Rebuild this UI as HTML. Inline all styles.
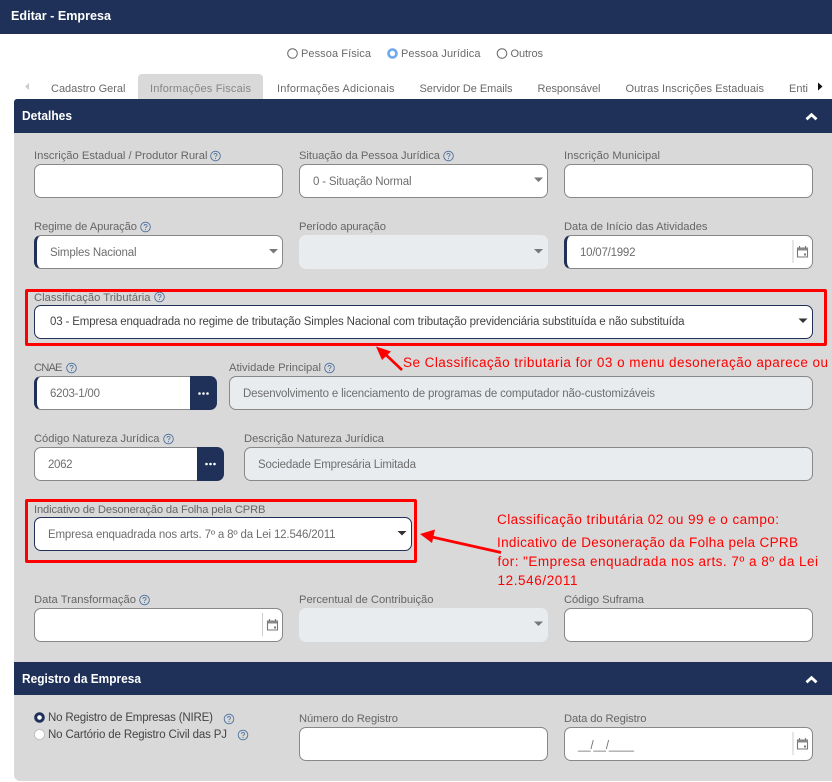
<!DOCTYPE html>
<html lang="pt-BR"><head><meta charset="utf-8"><title>Editar - Empresa</title>
<style>
html,body{margin:0;padding:0;background:#fff}
#p{position:relative;width:832px;height:782px;overflow:hidden;background:#fff;font-family:"Liberation Sans",sans-serif}
#p>div{position:absolute;box-sizing:border-box}
.n{background:#1f3158}
.i{background:#fff;border:1px solid #888;border-radius:7px;height:34px}
.d{background:#e9ecef;border-radius:7px;height:34px}
.h{border-left:3px solid #1f3158}
.a{border-color:#1f3158}
.r{border:3px solid #f00;border-radius:2px}
svg{position:absolute;left:0;top:0}
text{font-family:"Liberation Sans",sans-serif;font-size:11px;fill:#666}
.b{font-weight:700;font-size:13px;fill:#fff}
.t{font-size:11px;fill:#6a6a6a}
.l{font-size:11.2px;fill:#666}
.v{font-size:11.5px;fill:#6e6e6e}
.k{font-size:11.5px;fill:#444}
.o{font-size:13.5px;fill:#f00}
</style></head><body><div id="p">
<div class="n" style="left:0;top:0;width:832px;height:34px"></div>
<div style="left:138px;top:74px;width:125px;height:25px;background:#d9d9d9;border-radius:4px 4px 0 0"></div>
<div style="left:14px;top:99px;width:818px;height:682px;background:#d9d9d9;border-radius:4px 0 0 6px"></div>
<div class="n" style="left:14px;top:99px;width:818px;height:34px;border-radius:3px 0 0 0"></div>
<div class="n" style="left:14px;top:662px;width:818px;height:33px"></div>

<div class="i" style="left:34px;top:164px;width:249px"></div>
<div class="i" style="left:299px;top:164px;width:249px"></div>
<div class="i" style="left:564px;top:164px;width:249px"></div>
<div class="i h" style="left:34px;top:235px;width:249px"></div>
<div class="d" style="left:299px;top:235px;width:249px"></div>
<div class="i h" style="left:564px;top:235px;width:249px"></div>
<div class="i a" style="left:34px;top:305px;width:779px"></div>
<div class="i h" style="left:34px;top:376px;width:157px;border-radius:7px 0 0 7px"></div>
<div class="n" style="left:190px;top:376px;width:27px;height:34px;border-radius:0 7px 7px 0"></div>
<div class="d" style="left:229px;top:376px;width:584px;border:1px solid #888"></div>
<div class="i" style="left:34px;top:447px;width:164px;border-radius:7px 0 0 7px"></div>
<div class="n" style="left:197px;top:447px;width:27px;height:34px;border-radius:0 7px 7px 0"></div>
<div class="d" style="left:244px;top:447px;width:569px;border:1px solid #888"></div>
<div class="i a" style="left:34px;top:517px;width:378px"></div>
<div class="i" style="left:34px;top:608px;width:249px"></div>
<div class="d" style="left:299px;top:608px;width:249px"></div>
<div class="i" style="left:564px;top:608px;width:249px"></div>
<div class="i" style="left:299px;top:727px;width:249px"></div>
<div class="i" style="left:564px;top:727px;width:249px"></div>
<div class="r" style="left:25px;top:289px;width:802px;height:57px"></div>
<div class="r" style="left:25px;top:499px;width:392px;height:64px"></div>

<svg width="832" height="782" viewBox="0 0 832 782">
<defs>
<g id="c"><path d="M-5-3.500H5V5.500H-5Z" fill="none" stroke="#777" stroke-width="1.100"/><path d="M-5-3.500H5V-1H-5Z" fill="#888"/><path d="M-3-5.500V-3M3-5.500V-3" stroke="#777" stroke-width="1.100"/><rect x="1.500" y="2" width="2" height="2" fill="#777"/></g>
<g id="u"><circle r="4.800" fill="none" stroke="#4a6f9c" stroke-width=".9"/><path d="M-1.500-1.200C-1.400-3 1.600-3 1.600-1.100C1.600 0 0 0 0 1.100" fill="none" stroke="#4a6f9c" stroke-width=".8"/><circle cy="2.600" r=".55" fill="#4a6f9c"/></g>
<path id="v" d="M-4.500-2H4.500L0 2.500Z"/>
<path id="w" d="M-5 2.800L0-1.800L5 2.800" fill="none" stroke="#fff" stroke-width="2.800"/>
</defs>

<text class="b" x="11" y="20" textLength="100" lengthAdjust="spacingAndGlyphs">Editar - Empresa</text>

<circle cx="292.500" cy="53.500" r="4.800" fill="#fff" stroke="#666"/>
<circle cx="392.500" cy="53.500" r="4" fill="#fff" stroke="#6ea8ee" stroke-width="2.600"/>
<circle cx="502" cy="53.500" r="4.800" fill="#fff" stroke="#666"/>
<text class="t" x="301" y="57" textLength="70">Pessoa Física</text>
<text class="t" x="401" y="57" textLength="79.500">Pessoa Jurídica</text>
<text class="t" x="510.500" y="57" textLength="32.500">Outros</text>

<path d="M29 83V90L25 86.500Z" fill="#ccc"/>
<path d="M818 82.500V90.500L822.500 86.500Z" fill="#111"/>
<text class="t" x="51" y="92" textLength="74.500">Cadastro Geral</text>
<text class="t" x="150" y="92" textLength="101" style="fill:#858585">Informações Fiscais</text>
<text class="t" x="277" y="92" textLength="117.500">Informações Adicionais</text>
<text class="t" x="419.500" y="92" textLength="93">Servidor De Emails</text>
<text class="t" x="537.500" y="92" textLength="63">Responsável</text>
<text class="t" x="625.500" y="92" textLength="138.500">Outras Inscrições Estaduais</text>
<text class="t" x="789" y="92" textLength="19">Enti</text>

<text class="b" x="22" y="120" textLength="50" lengthAdjust="spacingAndGlyphs">Detalhes</text>
<use href="#w" x="811.500" y="116.500"/>
<text class="b" x="22" y="683" textLength="119" lengthAdjust="spacingAndGlyphs">Registro da Empresa</text>
<use href="#w" x="811.500" y="679.500"/>

<text class="l" x="34" y="159" textLength="173.500">Inscrição Estadual / Produtor Rural</text>
<use href="#u" x="215.500" y="156"/>
<text class="l" x="299" y="159" textLength="141">Situação da Pessoa Jurídica</text>
<use href="#u" x="448.500" y="156"/>
<text class="l" x="564" y="159" textLength="96">Inscrição Municipal</text>
<text class="v" x="313" y="185" textLength="98.500">0 - Situação Normal</text>
<use href="#v" x="538.500" y="179.500" fill="#777"/>

<text class="l" x="34" y="230" textLength="103">Regime de Apuração</text>
<use href="#u" x="145.500" y="227"/>
<text class="l" x="299" y="230" textLength="87">Período apuração</text>
<text class="l" x="564" y="230" textLength="143.500">Data de Início das Atividades</text>
<text class="v" x="50" y="256" textLength="86.500">Simples Nacional</text>
<use href="#v" x="273.500" y="251" fill="#777"/>
<use href="#v" x="538.500" y="251" fill="#777"/>
<text class="v" x="580" y="256" textLength="55.500">10/07/1992</text>
<path d="M793 240V263" stroke="#ccc"/>
<use href="#c" x="802.500" y="251.500"/>

<text class="l" x="34" y="301" textLength="116.500">Classificação Tributária</text>
<use href="#u" x="159.500" y="297"/>
<text class="k" x="50" y="325" textLength="634.500">03 - Empresa enquadrada no regime de tributação Simples Nacional com tributação previdenciária substituída e não substituída</text>
<use href="#v" x="803" y="320.500" fill="#333"/>

<text class="l" x="34" y="371" textLength="28.500">CNAE</text>
<use href="#u" x="71.500" y="368"/>
<text class="l" x="229" y="371" textLength="92">Atividade Principal</text>
<use href="#u" x="329.500" y="368"/>
<text class="v" x="50" y="397" textLength="50">6203-1/00</text>
<circle cx="199.500" cy="393.500" r="1.300" fill="#fff"/><circle cx="203.500" cy="393.500" r="1.300" fill="#fff"/><circle cx="207.500" cy="393.500" r="1.300" fill="#fff"/>
<text class="v" x="243" y="397" textLength="412">Desenvolvimento e licenciamento de programas de computador não-customizáveis</text>

<text class="l" x="34" y="442" textLength="125.500">Código Natureza Jurídica</text>
<use href="#u" x="168.500" y="439"/>
<text class="l" x="244" y="442" textLength="140">Descrição Natureza Jurídica</text>
<text class="v" x="48" y="468" textLength="24.500">2062</text>
<circle cx="206.500" cy="464" r="1.300" fill="#fff"/><circle cx="210.500" cy="464" r="1.300" fill="#fff"/><circle cx="214.500" cy="464" r="1.300" fill="#fff"/>
<text class="v" x="258" y="468" textLength="158">Sociedade Empresária Limitada</text>

<text class="l" x="34" y="513" textLength="231.500">Indicativo de Desoneração da Folha pela CPRB</text>
<text class="v" x="48" y="538" textLength="287.500">Empresa enquadrada nos arts. 7º a 8º da Lei 12.546/2011</text>
<use href="#v" x="402" y="533" fill="#333"/>

<text class="l" x="34" y="603" textLength="102">Data Transformação</text>
<use href="#u" x="144.500" y="600"/>
<text class="l" x="299" y="603" textLength="134.500">Percentual de Contribuição</text>
<text class="l" x="564" y="603" textLength="80">Código Suframa</text>
<path d="M262.500 613V636" stroke="#ccc"/>
<use href="#c" x="272.500" y="624.500"/>
<use href="#v" x="538.500" y="623.500" fill="#777"/>

<circle cx="39.500" cy="717.500" r="3.800" fill="#fff" stroke="#1f3158" stroke-width="3"/>
<circle cx="39.500" cy="734.500" r="5" fill="#fff" stroke="#bbb" stroke-width=".8"/>
<text class="k" x="48" y="721" textLength="165">No Registro de Empresas (NIRE)</text>
<use href="#u" x="229" y="719"/>
<text class="k" x="48" y="738" textLength="179">No Cartório de Registro Civil das PJ</text>
<use href="#u" x="243" y="735"/>
<text class="l" x="299" y="722" textLength="99">Número do Registro</text>
<text class="l" x="564" y="722" textLength="82.500">Data do Registro</text>
<text class="v" x="578" y="749" textLength="56">__/__/____</text>
<path d="M793 732V755" stroke="#ccc"/>
<use href="#c" x="802.500" y="743.500"/>

<path d="M402 370L383 352" stroke="#f00" stroke-width="2.600"/>
<path d="M376 346.500L391 351.500L382 360Z" fill="#f00"/>
<path d="M501 552.500L432 537" stroke="#f00" stroke-width="2.800"/>
<path d="M420 534L435 529.500L432 543Z" fill="#f00"/>
<text class="o" x="403" y="367" textLength="425">Se Classificação tributaria for 03 o menu desoneração aparece ou</text>
<text class="o" x="497" y="524" textLength="282">Classificação tributária 02 ou 99 e o campo:</text>
<text class="o" x="497" y="547" textLength="301">Indicativo de Desoneração da Folha pela CPRB</text>
<text class="o" x="497.500" y="566" textLength="320.500">for: "Empresa enquadrada nos arts. 7º a 8º da Lei</text>
<text class="o" x="497.500" y="585" textLength="80">12.546/2011</text>
</svg>
</div></body></html>
